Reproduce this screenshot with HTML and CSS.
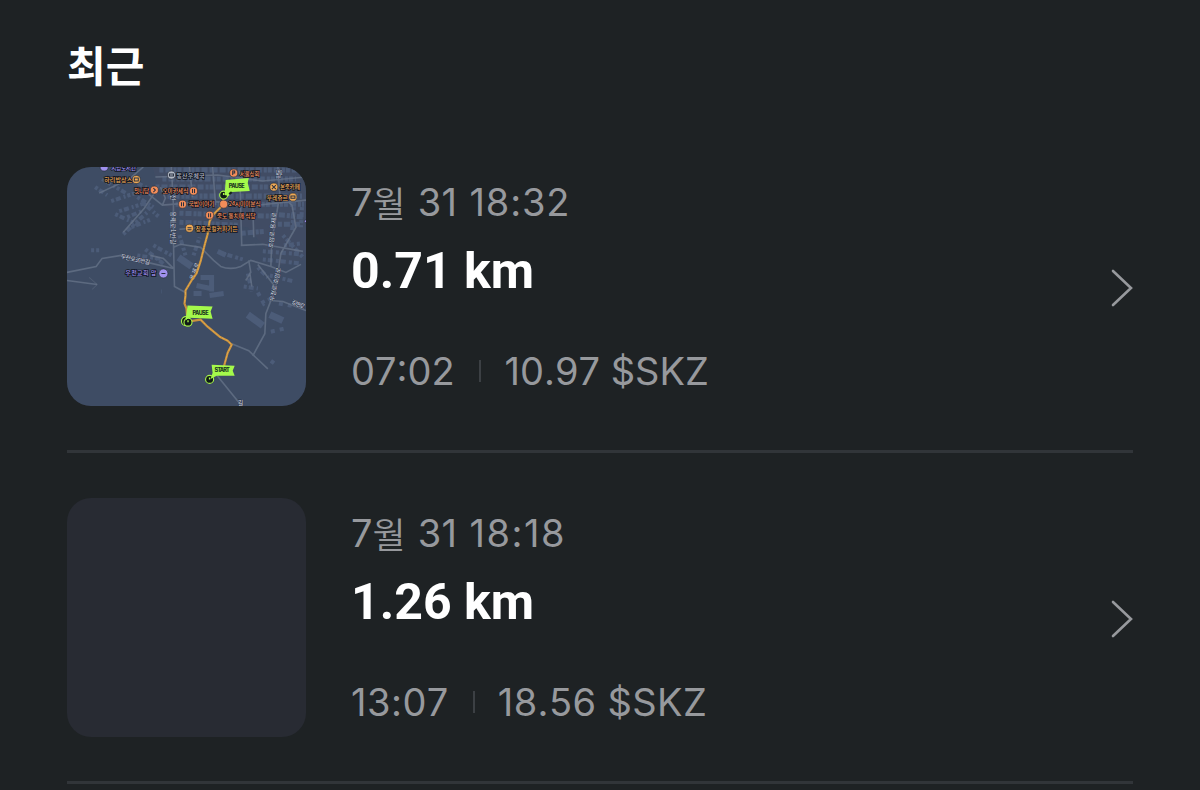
FILE: index.html
```html
<!DOCTYPE html>
<html lang="ko">
<head>
  <meta charset="UTF-8">
  <title>최근</title>
  <link rel="stylesheet" href="styles.css">
</head>
<body>

<h1>최근</h1>

<ul class="list">
  <li class="row">
    <div class="thumb">
      <svg class="map" viewBox="0 0 238 238">
        <rect width="238" height="238" fill="#3f4d65"/>
        <path class="town" d="M85 0H238V92L212 98L180 60L120 55L96 38Z"/>

        <!-- buildings -->
        <g class="buildings">
          <path stroke-width="4" stroke-dasharray="3 2 5 3 2 2" d="M35 12L62 28M44 34L80 22M52 44L78 36M48 47L70 57M56 67L80 45M28 20L40 28M66 14L92 27M76 36L92 50M64 60L84 52M60 50L74 44M70 30L86 40"/>
          <path stroke-width="5" stroke-dasharray="4 2 6 2 3 1" d="M92 3H230M95 12H228M88 20H232M100 29H234M108 37H236M112 46L205 49M112 55L170 58M174 66L198 64M205 47L236 50M210 57H234"/>
          <path stroke-width="4" stroke-dasharray="3 2 5 3" d="M78 82L98 98M86 78L104 88M70 88L96 92M24 83L32 83M112 68L118 88M126 88L132 70M215 68L235 90M195 92L232 96M202 108L226 114M180 106L184 124M176 119L190 121M155 86L175 92M216 78L234 76M190 100L200 110M195 84L234 87M226 40L224 66M234 40L233 60"/>
          <path stroke-width="7" d="M180 147L195 158M202 147L215 153M111 90L124 99"/>
          <path stroke-width="5" d="M133 110H144V124M129 118L143 121M142 128L156 126M126 126H134M150 84L158 88"/>
          <path stroke-width="4" stroke-dasharray="4 5" d="M190 125L196 136L204 130M211 136L228 139M94 124H94.500M203 164L216 161M203 193L207 196"/>
        </g>

        <!-- roads -->
        <g class="roads">
          <path d="M0 105L29 99L35 91L54 88L80 95L106 101M0 113L30 117"/>
          <path d="M104 0L106 38V73L107 119L118 125M106 101L96 91L83 88M106 80L113 77L133 80L146 93L153 99Q163 103 173 99L183 93L203 99L218 105L233 97"/>
          <path d="M80 26L95 38L145 34L180 39L238 33M95 38L98 31L93 20M145 0L148 38M122 0L125 30M172 4L174 78M173 78L195 77L235 84M32 26L62 12L76 0M56 65L77 41L87 26"/>
          <path d="M210 0L212 28L204 73L203 99M212 28L224 38L228 60L213 86L208 120L198 146L197 166L185 188M208 120L190 97M203 133L215 134L238 143M181 93L183 105L178 113M182 105L184 119"/>
          <path d="M164 176L181 183L200 201M148 206L174 238M88 10L150 8L195 14L238 10M185 39L186 70M112 62L170 58"/>
        </g>
        <path class="roads thin" d="M22 110L30 117L25 122"/>

        <!-- road names -->
        <g class="street">
          <text x="53" y="91" textLength="30" transform="rotate(12 53 91)">우전로36번길</text>
          <text transform="translate(104 44) rotate(90)" textLength="33">용제로1번길</text>
          <text transform="translate(104 22) rotate(90)">우전</text>
          <text transform="translate(205 81) rotate(-84)" textLength="36">호암로 용제로</text>
          <text transform="translate(206 134) rotate(-78)" textLength="34">우정로 호암로</text>
          <text transform="translate(126 113) rotate(-70)" textLength="18">용제로</text>
          <text x="223" y="136" textLength="14" transform="rotate(22 223 136)">강변로</text>
          <text transform="translate(213 12) rotate(-90)" textLength="10">학동</text>
          <text x="170" y="237">길</text>
        </g>

        <path class="route" d="M156 28L155 38L146 47L142 54L140 67L137 78L133 94L129 106L124 113L118 123V128L117 136L119 141L120 154L133 152L140 159L152 169L160 173L164 177L160 185L157 196L155 203"/>
        <path class="route-edge" d="M155 38L146 47L142 54L140 67L137 78L133 94L129 106L124 113L118 123V128L117 136M133 152L140 159L152 169L160 173L164 177L160 185L157 196"/>

        <!-- places -->
        <g class="places">
          <g fill="#f0aa55">
            <text x="37" y="15" textLength="28">하리밥상스</text><circle cx="69" cy="12.500" r="4"/>
            <text x="212" y="22" textLength="20">본죽카페</text><circle cx="206" cy="20" r="4"/>
            <text x="199" y="33" textLength="21">뚜레쥬르</text><circle cx="225" cy="30" r="4"/>
            <text x="128" y="64" textLength="42">장흥로컬커피가든</text><circle cx="122" cy="61" r="4"/>
          </g>
          <g fill="#f28d59">
            <text x="67" y="26" textLength="15">맛나당</text><circle cx="87" cy="23" r="4"/>
            <text x="95" y="26" textLength="26">오마카세식</text><circle cx="126" cy="24" r="4"/>
            <text x="121" y="39" textLength="26">국밥이야기</text><circle cx="115" cy="37" r="4"/>
            <text x="161" y="39" textLength="32">24시미미분식</text><circle cx="156" cy="37" r="4"/>
            <text x="149" y="51" textLength="39">죽도 통치매 식당</text><circle cx="142" cy="48" r="4"/>
            <text x="172" y="9" textLength="20">서울상회</text><circle cx="166" cy="6" r="4"/>
          </g>
          <g fill="#a091ee">
            <text x="58" y="108" textLength="31">우전교회 앞</text><circle cx="96" cy="106" r="4.500"/>
            <text x="44" y="3" textLength="25">시립도서관</text><circle cx="37" cy="0" r="4"/>
            <circle cx="238" cy="54" r="1.500"/>
          </g>
          <g fill="#b3bac6">
            <text x="109" y="11" textLength="28">동산우체국</text><circle cx="104" cy="8" r="4"/>
          </g>
        </g>
        <g class="glyphs">
          <path d="M67 11H71V14H67ZM204 18L208 22M208 18L204 22M223 29H227V31H223ZM120 60.500H124M120 62.500H124M94 106H98M102 7H106V9H102ZM165 8V4H167V6H165"/>
          <path d="M86 21L88 23L86 25M125 22V26M127 22V26M114 35V39M116 35V39M141 46V50M143 46V50"/>
        </g>

        <!-- markers -->
        <g class="pin">
          <circle cx="156" cy="28" r="4"/><circle cx="118.500" cy="153.500" r="4.500"/><circle cx="120.500" cy="154.500" r="4"/><circle cx="142" cy="211.500" r="4"/>
        </g>
        <path class="pin-dot" d="M156 26V28M120.500 152.500V154.500M142 209.500V211.500"/>
        <g class="flag">
          <path d="M158 13L181 11L180 16L182 24L164 25L161 29L157 28Z"/>
          <path d="M120 138L145 139L143 144L145 151L121 150L118 153Z"/>
          <path d="M144 197L167 198L165 203L167 208L149 208L143 211L145 205Z"/>
        </g>
        <path d="M161.500 27L164 25" stroke="#17251b" stroke-width="2"/>
        <g class="flag-text">
          <text x="161" y="21" textLength="16">PAUSE</text>
          <text x="125" y="147.500" textLength="16">PAUSE</text>
          <text x="147" y="204.500" textLength="15">START</text>
        </g>
      </svg>
    </div>
    <div class="info">
      <div class="date"><span>7</span><span class="ko">월</span><span class="day">31</span><span class="time">18:32</span></div>
      <div class="distance">0.71 km</div>
      <div class="meta"><span class="duration">07:02</span><i class="bar"></i><span class="token">10.97 $SKZ</span></div>
    </div>
    <svg class="chevron" viewBox="0 0 22 38"><path d="M2 2L20 19L2 36"/></svg>
  </li>

  <li class="row wide">
    <div class="thumb"></div>
    <div class="info">
      <div class="date"><span>7</span><span class="ko">월</span><span class="day">31</span><span class="time">18:18</span></div>
      <div class="distance">1.26 km</div>
      <div class="meta"><span class="duration">13:07</span><i class="bar"></i><span class="token">18.56 $SKZ</span></div>
    </div>
    <svg class="chevron" viewBox="0 0 22 38"><path d="M2 2L20 19L2 36"/></svg>
  </li>
</ul>

</body>
</html>
```
FILE: styles.css
```css
* {
  box-sizing: border-box;
}
body {
  margin: 0;
  padding: 34px 67px 0;
  height: 790px;
  overflow: hidden;
  background-color: #1e2224;
  color: #fff;
  font-family: Inter, "Noto Sans CJK KR", sans-serif;
}
h1 {
  margin: 0;
  height: 87px;
  font-family: "Noto Sans CJK KR", sans-serif;
  font-size: 42px;
  line-height: 60px;
  font-weight: 700;
}
.list {
  margin: 0;
  padding: 0;
  list-style: none;
}
.row {
  display: flex;
  height: 331px;
  padding-top: 45px;
  border-bottom: 3px solid #313539;
}
.row:first-child {
  height: 332px;
  padding-top: 46px;
}
.thumb {
  width: 239px;
  height: 239px;
  border-radius: 24px;
  background-color: #282b33;
  overflow: hidden;
}
.map {
  display: block;
  width: 100%;
  height: 100%;
}
.info {
  flex: 1;
  padding: 11px 0 0 45px;
}
.date, .meta {
  display: flex;
  align-items: center;
  height: 48px;
  font-size: 38px;
  line-height: 48px;
  font-kerning: none;
  color: #97999d;
}
.ko {
  font-family: "Noto Sans CJK KR", sans-serif;
  font-weight: 350;
  font-size: 36px;
}
.day {
  margin-left: 12px;
  letter-spacing: 0.5px;
}
.time {
  margin-left: 12px;
  letter-spacing: 0.8px;
}
.distance {
  margin-top: 15px;
  height: 60px;
  font-family: Roboto, sans-serif;
  font-size: 50px;
  line-height: 60px;
  font-weight: 700;
}
.meta {
  margin-top: 46px;
}
.bar {
  width: 2px;
  height: 22px;
  margin: 0 24px;
  background-color: #3c4044;
}
.wide .time {
  letter-spacing: 1.5px;
}
.wide .duration {
  letter-spacing: 0.5px;
}
.wide .token {
  margin-left: -1px;
  letter-spacing: 0.4px;
}
.chevron {
  width: 22px;
  height: 38px;
  margin-top: 102px;
  fill: none;
  stroke: #97999d;
  stroke-width: 2.6;
  stroke-linecap: round;
}

/* map thumbnail */
.town {
  fill: #455065;
  opacity: 0.6;
}
.buildings {
  fill: none;
  stroke: #536485;
  opacity: 0.65;
}
.roads {
  fill: none;
  stroke: #68758a;
  stroke-width: 1.6;
  opacity: 0.75;
}
.thin {
  stroke-width: 1;
  opacity: 0.4;
}
.route {
  fill: none;
  stroke: #c9913f;
  stroke-width: 2.2;
  stroke-linejoin: round;
}
.route-edge {
  fill: none;
  stroke: #e9ae4d;
  stroke-width: 0.8;
  stroke-dasharray: 3 1;
}
.street, .places {
  font-family: "Noto Sans CJK KR", sans-serif;
  font-size: 6px;
}
.street {
  fill: #d3dbe5;
  stroke: #2c3547;
  stroke-width: 0.8;
  paint-order: stroke;
}
.places text {
  font-weight: 500;
  stroke: #111622;
  stroke-width: 1.6;
  paint-order: stroke;
}
.places circle {
  stroke: #252b38;
  stroke-width: 0.6;
}
.glyphs {
  fill: none;
  stroke: #293040;
}
.pin {
  fill: #101b17;
  stroke: #a9f74a;
  stroke-width: 1.1;
}
.pin-dot {
  stroke: #a9f74a;
  stroke-width: 1.4;
}
.flag {
  fill: #a4f94b;
}
.flag-text {
  font-family: Inter, sans-serif;
  font-size: 5.5px;
  font-weight: 800;
  fill: #1c3820;
}
```
